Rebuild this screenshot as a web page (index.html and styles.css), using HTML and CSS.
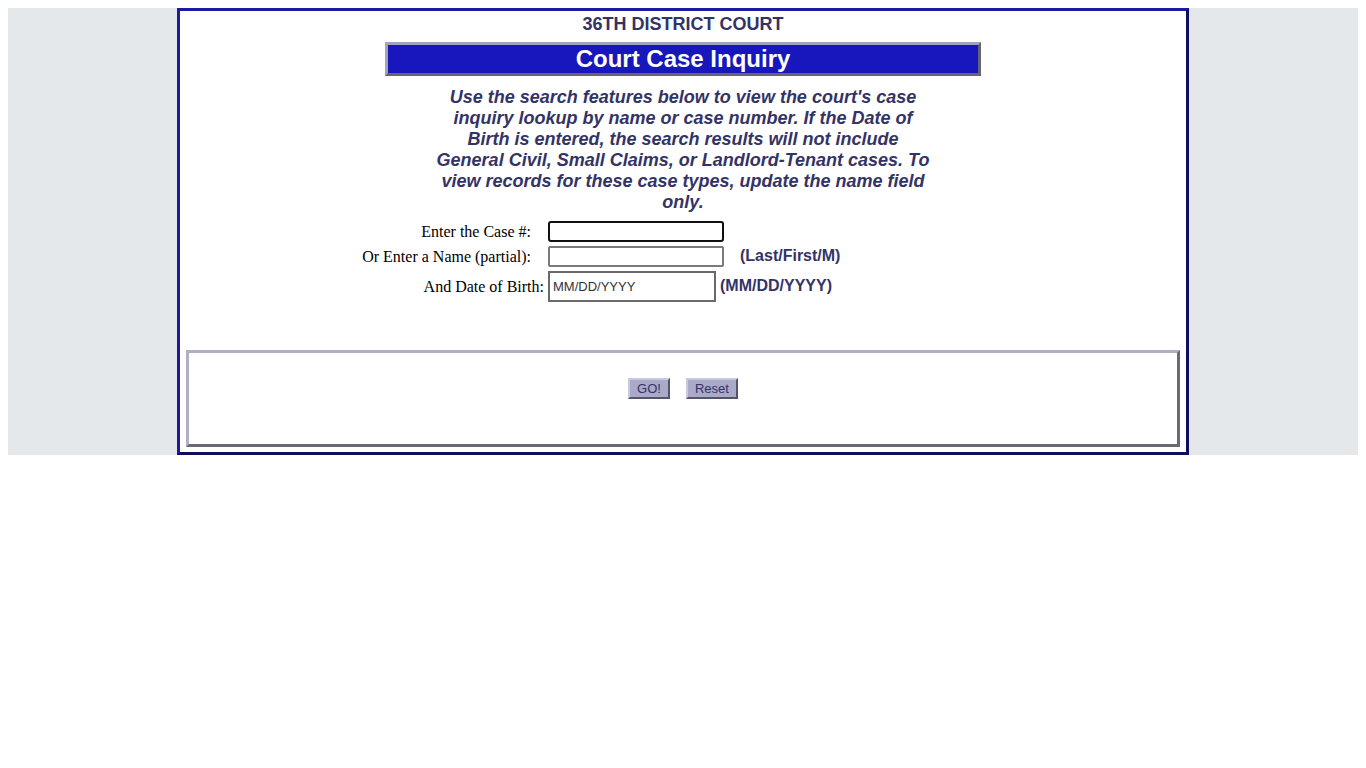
FILE: index.html
```html
<!DOCTYPE html>
<html>
<head>
<meta charset="utf-8">
<title>Court Case Inquiry</title>
<link rel="stylesheet" href="styles.css">
</head>
<body>
<div class="backdrop">
  <div class="panel">
    <div class="court-name">36TH DISTRICT COURT</div>
    <div class="title-bar">Court Case Inquiry</div>
    <p class="intro">Use the search features below to view the court's case<br>inquiry lookup by name or case number. If the Date of<br>Birth is entered, the search results will not include<br>General Civil, Small Claims, or Landlord-Tenant cases. To<br>view records for these case types, update the name field<br>only.</p>
    <form class="search-form">
      <div class="row">
        <label class="label label-pad">Enter the Case #:</label>
        <input class="field field-focus" type="text">
      </div>
      <div class="row">
        <label class="label label-pad">Or Enter a Name (partial):</label>
        <input class="field" type="text">
        <span class="hint hint-name">(Last/First/M)</span>
      </div>
      <div class="row">
        <label class="label">And Date of Birth:</label>
        <input class="field field-dob" type="text" placeholder="MM/DD/YYYY">
        <span class="hint hint-dob">(MM/DD/YYYY)</span>
      </div>
    </form>
    <div class="action-box">
      <button class="btn" type="button">GO!</button>
      <button class="btn" type="button">Reset</button>
    </div>
  </div>
</div>
</body>
</html>
```

FILE: styles.css
```css
html, body {
  margin: 0;
  padding: 0;
  background: #ffffff;
}
body {
  margin: 8px;
  font-family: "Liberation Sans", Arial, sans-serif;
}
.backdrop {
  background: #e4e8eb;
  display: flex;
  justify-content: center;
}
.panel {
  width: 1006px;
  background: #ffffff;
  border: 3px solid;
  border-color: #1a1aa6 #0e0e5e #0e0e5e #1a1aa6;
  padding: 3px 0 5px 0;
}
.court-name {
  text-align: center;
  font-weight: bold;
  font-size: 18px;
  line-height: 20px;
  color: #333366;
}
.title-bar {
  width: 590px;
  margin: 8px auto 0 auto;
  height: 28px;
  line-height: 28px;
  background: #1717bd;
  border: 3px solid;
  border-color: #a2a2bc #65656f #65656f #a2a2bc;
  color: #ffffff;
  font-weight: bold;
  font-size: 24px;
  text-align: center;
}
.intro {
  margin: 11px auto 0 auto;
  width: 540px;
  text-align: center;
  font-weight: bold;
  font-style: italic;
  font-size: 18px;
  line-height: 21px;
  color: #333366;
}
.search-form {
  margin: 8px 0 0 0;
  padding-left: 182px;
  display: flex;
  flex-direction: column;
  gap: 4px;
}
.row {
  display: flex;
  align-items: center;
}
.label {
  width: 186px;
  box-sizing: border-box;
  text-align: right;
  padding-right: 4px;
  font-family: "Liberation Serif", "Times New Roman", serif;
  font-size: 16px;
  line-height: 19px;
  color: #000000;
}
.label-pad {
  padding-right: 17px;
}
.field {
  box-sizing: border-box;
  width: 176px;
  height: 21px;
  margin: 0;
  border: 2px solid #7a7a7a;
  border-radius: 2px;
  background: #ffffff;
  padding: 0 3px;
  font-family: "Liberation Sans", Arial, sans-serif;
  font-size: 13px;
  outline: none;
}
.field-focus {
  border-color: #101010;
  border-radius: 3px;
}
.field-dob {
  width: 168px;
  height: 31px;
  border-color: #6a6a6a;
  border-radius: 0;
}
.field-dob::placeholder {
  color: #333333;
}
.hint {
  font-weight: bold;
  font-size: 16px;
  line-height: 19px;
  color: #333366;
}
.hint-name {
  margin-left: 16px;
  margin-top: -2px;
}
.hint-dob {
  margin-left: 4px;
  margin-top: -2px;
}
.action-box {
  margin: 48px 6px 0 6px;
  height: 66px;
  border: 3px solid;
  border-color: #b0b0c2 #6a6a72 #6a6a72 #b0b0c2;
  display: flex;
  justify-content: center;
  align-items: flex-start;
  gap: 16px;
  padding-top: 25px;
}
.btn {
  height: 21px;
  margin: 0;
  padding: 0 7px;
  background: #a9a9c9;
  border: 2px solid;
  border-color: #c9c9dd #55556a #55556a #c9c9dd;
  color: #333366;
  font-family: "Liberation Sans", Arial, sans-serif;
  font-size: 13px;
  line-height: 17px;
}
```
